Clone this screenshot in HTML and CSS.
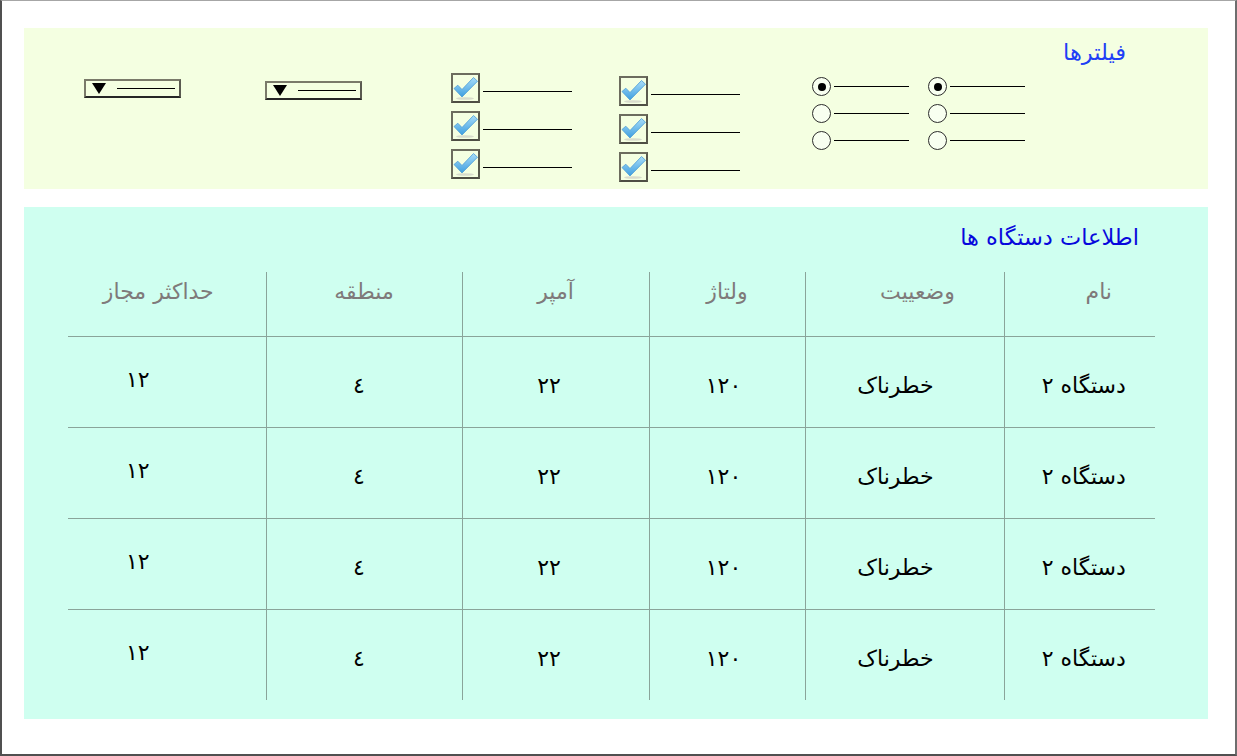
FILE: index.html
```html
<!DOCTYPE html>
<html lang="fa" dir="rtl">
<head>
<meta charset="utf-8">
<title>اطلاعات دستگاه ها</title>
<link rel="stylesheet" href="styles.css">
</head>
<body>
<div class="frame">
  <section class="panel filters">
    <h2 class="ptitle filters-title">فیلترها</h2>
    <div class="controls">
      <div class="radio-col r1">
        <div class="radio-item"><span class="radio on"></span><span class="ln rl"></span></div>
        <div class="radio-item"><span class="radio"></span><span class="ln rl"></span></div>
        <div class="radio-item"><span class="radio"></span><span class="ln rl"></span></div>
      </div>
      <div class="radio-col r2">
        <div class="radio-item"><span class="radio on"></span><span class="ln rl"></span></div>
        <div class="radio-item"><span class="radio"></span><span class="ln rl"></span></div>
        <div class="radio-item"><span class="radio"></span><span class="ln rl"></span></div>
      </div>
      <div class="check-col c2">
        <div class="check-item"><span class="box"><svg viewBox="0 0 25 25" width="25" height="25"><defs><linearGradient id="g1" x1="0" y1="0" x2="0" y2="1"><stop offset="0" stop-color="#a8dcf8"/><stop offset="1" stop-color="#3e9fe0"/></linearGradient></defs><ellipse cx="12" cy="22.5" rx="9" ry="1.3" fill="#d8dccc"/><polygon points="1,12.5 4.8,9.2 9,13.5 20.5,1.5 24.5,5.2 9,21" fill="url(#g1)" stroke="#4a9cd6" stroke-width="0.8" stroke-linejoin="round"/></svg></span><span class="ln cl"></span></div>
        <div class="check-item"><span class="box"><svg viewBox="0 0 25 25" width="25" height="25"><ellipse cx="12" cy="22.5" rx="9" ry="1.3" fill="#d8dccc"/><polygon points="1,12.5 4.8,9.2 9,13.5 20.5,1.5 24.5,5.2 9,21" fill="url(#g1)" stroke="#4a9cd6" stroke-width="0.8" stroke-linejoin="round"/></svg></span><span class="ln cl"></span></div>
        <div class="check-item"><span class="box"><svg viewBox="0 0 25 25" width="25" height="25"><ellipse cx="12" cy="22.5" rx="9" ry="1.3" fill="#d8dccc"/><polygon points="1,12.5 4.8,9.2 9,13.5 20.5,1.5 24.5,5.2 9,21" fill="url(#g1)" stroke="#4a9cd6" stroke-width="0.8" stroke-linejoin="round"/></svg></span><span class="ln cl"></span></div>
      </div>
      <div class="check-col c1">
        <div class="check-item"><span class="box"><svg viewBox="0 0 25 25" width="25" height="25"><ellipse cx="12" cy="22.5" rx="9" ry="1.3" fill="#d8dccc"/><polygon points="1,12.5 4.8,9.2 9,13.5 20.5,1.5 24.5,5.2 9,21" fill="url(#g1)" stroke="#4a9cd6" stroke-width="0.8" stroke-linejoin="round"/></svg></span><span class="ln cl"></span></div>
        <div class="check-item"><span class="box"><svg viewBox="0 0 25 25" width="25" height="25"><ellipse cx="12" cy="22.5" rx="9" ry="1.3" fill="#d8dccc"/><polygon points="1,12.5 4.8,9.2 9,13.5 20.5,1.5 24.5,5.2 9,21" fill="url(#g1)" stroke="#4a9cd6" stroke-width="0.8" stroke-linejoin="round"/></svg></span><span class="ln cl"></span></div>
        <div class="check-item"><span class="box"><svg viewBox="0 0 25 25" width="25" height="25"><ellipse cx="12" cy="22.5" rx="9" ry="1.3" fill="#d8dccc"/><polygon points="1,12.5 4.8,9.2 9,13.5 20.5,1.5 24.5,5.2 9,21" fill="url(#g1)" stroke="#4a9cd6" stroke-width="0.8" stroke-linejoin="round"/></svg></span><span class="ln cl"></span></div>
      </div>
      <div class="select s2"><svg class="tri" viewBox="0 0 14 11" width="14" height="11"><polygon points="0,0 14,0 7,11" fill="#000"/></svg><span class="ln sl"></span></div>
      <div class="select s1"><svg class="tri" viewBox="0 0 14 11" width="14" height="11"><polygon points="0,0 14,0 7,11" fill="#000"/></svg><span class="ln sl"></span></div>
    </div>
  </section>

  <section class="panel devices">
    <h2 class="ptitle devices-title">اطلاعات دستگاه ها</h2>
    <table class="grid">
      <colgroup>
        <col class="w1"><col class="w2"><col class="w3"><col class="w4"><col class="w5"><col class="w6">
      </colgroup>
      <thead>
        <tr><th class="h-name">نام</th><th class="h-st">وضعییت</th><th>ولتاژ</th><th>آمپر</th><th>منطقه</th><th class="h-max">حداکثر مجاز</th></tr>
      </thead>
      <tbody>
        <tr><td class="name">دستگاه ٢</td><td class="st">خطرناک</td><td class="volt">١٢٠</td><td class="amp">٢٢</td><td class="zone">٤</td><td class="max">١٢</td></tr>
        <tr><td class="name">دستگاه ٢</td><td class="st">خطرناک</td><td class="volt">١٢٠</td><td class="amp">٢٢</td><td class="zone">٤</td><td class="max">١٢</td></tr>
        <tr><td class="name">دستگاه ٢</td><td class="st">خطرناک</td><td class="volt">١٢٠</td><td class="amp">٢٢</td><td class="zone">٤</td><td class="max">١٢</td></tr>
        <tr><td class="name">دستگاه ٢</td><td class="st">خطرناک</td><td class="volt">١٢٠</td><td class="amp">٢٢</td><td class="zone">٤</td><td class="max">١٢</td></tr>
      </tbody>
    </table>
  </section>
</div>
</body>
</html>
```

FILE: styles.css
```css
html, body {
  margin: 0;
  padding: 0;
  background: #ffffff;
}

body {
  font-family: "DejaVu Sans", "Noto Sans", sans-serif;
  font-size: 22px;
}

.frame {
  width: 1237px;
  height: 756px;
  box-sizing: border-box;
  border-top: 1px solid #a6a6a6;
  border-left: 2px solid #505050;
  border-right: 2px solid #6e6e6e;
  border-bottom: 2px solid #505050;
  padding: 27px 27px 0 22px;
  display: flex;
  flex-direction: column;
  gap: 18px;
}

.panel {
  width: 1184px;
  box-sizing: border-box;
}

.filters {
  height: 161px;
  background: #f4ffe1;
  padding-top: 11px;
}

.devices {
  height: 512px;
  background: #cffff0;
  padding-top: 17px;
}

.ptitle {
  margin: 0;
  font-weight: normal;
  font-size: 22.5px;
  line-height: 27px;
}

.filters-title {
  color: #1f3ff6;
  margin-right: 82px;
}

.devices-title {
  color: #0808dc;
  margin-right: 69px;
}

/* filter controls */
.controls {
  display: flex;
  align-items: flex-start;
  margin-top: 7px;
  margin-right: 183px;
}

.ln {
  display: block;
  height: 1px;
  background: #000;
}

.radio-col {
  direction: ltr;
  display: flex;
  flex-direction: column;
  gap: 8px;
  margin-top: 4px;
}

.r2 { margin-right: 19px; }

.radio-item {
  display: flex;
  align-items: center;
  height: 19px;
}

.radio {
  width: 19px;
  height: 19px;
  box-sizing: border-box;
  border: 1px solid #2c2c2c;
  border-radius: 50%;
  background: #f8fff0;
  display: flex;
  align-items: center;
  justify-content: center;
}

.radio.on::after {
  content: "";
  width: 8px;
  height: 8px;
  border-radius: 50%;
  background: #000;
}

.rl {
  width: 75px;
  margin-left: 3px;
}

.check-col {
  direction: ltr;
  display: flex;
  flex-direction: column;
  gap: 9px;
}

.c2 { margin-right: 72px; margin-top: 3px; }
.c1 { margin-right: 47px; }

.check-item {
  display: flex;
  align-items: flex-start;
  height: 29px;
}

.box {
  width: 29px;
  height: 30px;
  box-sizing: border-box;
  border: 2px solid #6c6c5e;
  border-right-color: #5a5a4e;
  border-bottom-color: #4e4e44;
  display: flex;
  align-items: center;
  justify-content: center;
}

.cl {
  width: 89px;
  margin-left: 3px;
  margin-top: 18px;
}

.select {
  direction: ltr;
  width: 97px;
  height: 19px;
  box-sizing: border-box;
  border: 2px solid #7a7a6a;
  border-bottom-color: #262626;
  border-right-color: #5a5a50;
  display: flex;
  align-items: center;
  padding-left: 6px;
}

.s2 { margin-right: 89px; margin-top: 8px; }
.s1 { margin-right: 84px; margin-top: 6px; }

.tri { display: block; }

.sl {
  width: 58px;
  margin-left: 11px;
}

/* table */
.grid {
  margin-top: 21px;
  margin-right: 53px;
  width: 1087px;
  table-layout: fixed;
  border-collapse: collapse;
}

.w1 { width: 151px; }
.w2 { width: 199px; }
.w3 { width: 156px; }
.w4 { width: 187px; }
.w5 { width: 196px; }
.w6 { width: 198px; }

.grid th,
.grid td {
  padding: 0;
  text-align: center;
  vertical-align: top;
  line-height: 26px;
  border-left: 1px solid #8aa49a;
}

.grid th:last-child,
.grid td:last-child {
  border-left: none;
}

.grid th {
  font-weight: normal;
  color: #7f7a7a;
  height: 64px;
  padding-top: 7px;
  box-sizing: border-box;
  border-bottom: 1px solid #8aa49a;
}

.grid th.h-name { padding-left: 38px; }
.grid th.h-st { padding-left: 26px; }
.grid th.h-max { padding-right: 17px; }

.grid td {
  color: #000;
  height: 91px;
  box-sizing: border-box;
  padding-top: 36px;
}

.grid tbody tr:not(:last-child) td {
  border-bottom: 1px solid #8aa49a;
}

.grid td.name { padding-left: 8px; }
.grid td.st { padding-right: 18px; }
.grid td.volt { padding-right: 7px; }
.grid td.amp { padding-right: 13px; }
.grid td.zone { padding-right: 10px; }
.grid td.max {
  padding-top: 30px;
  padding-right: 58px;
}
```
